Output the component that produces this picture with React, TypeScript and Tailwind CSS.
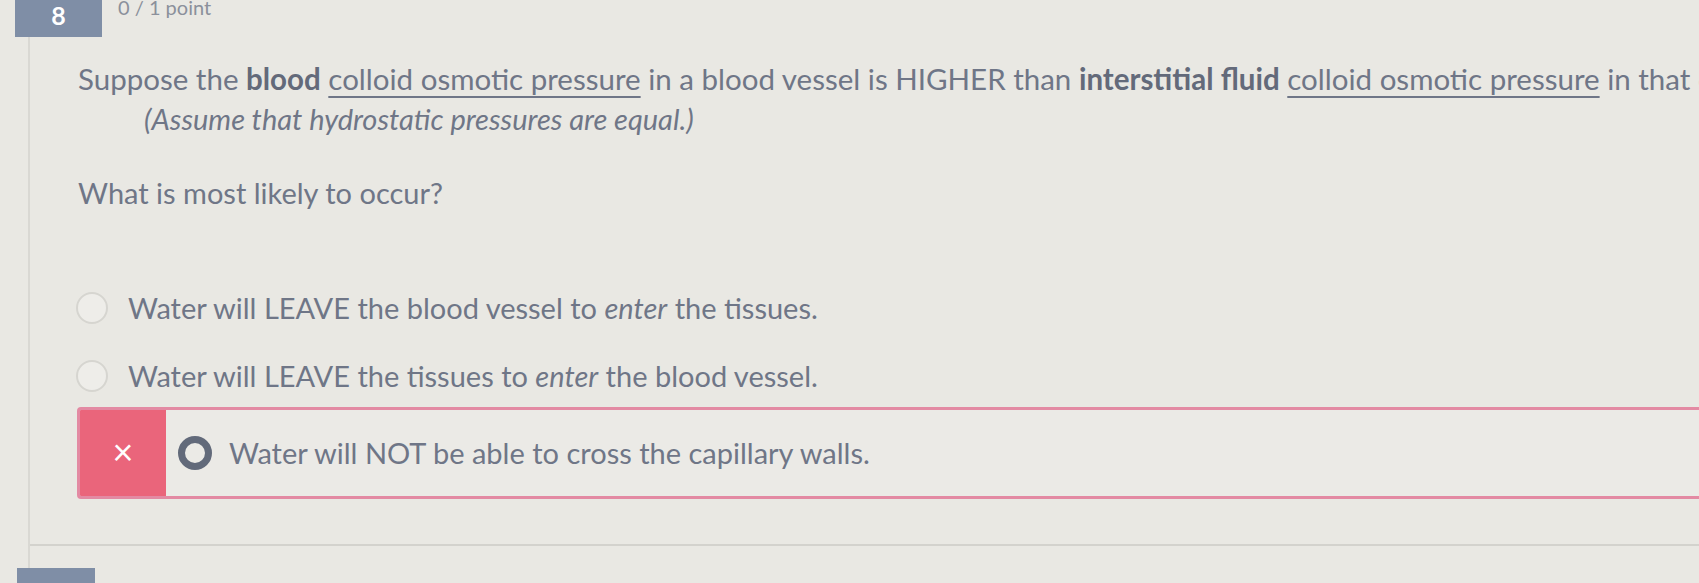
import React from "react";

function Radio() {
  return (
    <div className="w-[32px] h-[32px] rounded-full border-[2px] border-[#d6d5d0] bg-[#eeede9] shrink-0" />
  );
}

export default function App() {
  return (
    <div
      className="relative w-[1699px] h-[583px] overflow-hidden bg-[#e9e8e3] text-[#6f7687] flex flex-col"
      style={{ fontFamily: "Lato, 'Open Sans', sans-serif" }}
    >
      {/* header */}
      <div className="flex items-start h-[37px] shrink-0">
        <div className="ml-[15px] w-[87px] h-[37px] bg-[#7f8ea6] flex items-center justify-center text-white text-[25px] font-bold leading-[28px] pb-[8px]">
          8
        </div>
        <div className="ml-[16px] -mt-[7px] text-[20px] text-[#8b909b] leading-[28px]">0 / 1 point</div>
      </div>

      {/* body */}
      <div className="ml-[28px] border-l-[2px] border-[#d9d8d3] flex-1 flex flex-col">
        <div className="pl-[48px] pt-[22px] flex flex-col">
          <div className="whitespace-nowrap text-[29.5px] leading-[40px]">
            Suppose the <span className="font-bold text-[#636a7a]">blood</span>{" "}
            <span className="underline underline-offset-[6px] decoration-[2px]">colloid osmotic pressure</span> in a blood vessel is HIGHER than{" "}
            <span className="font-bold text-[#636a7a]">interstitial fluid</span>{" "}
            <span className="underline underline-offset-[6px] decoration-[2px]">colloid osmotic pressure</span> in that capillary.
          </div>
          <div className="pl-[66px] italic whitespace-nowrap text-[29px] leading-[40px]">
            (Assume that hydrostatic pressures are equal.)
          </div>
          <div className="mt-[34px] text-[29px] leading-[40px] whitespace-nowrap">What is most likely to occur?</div>

          <div className="mt-[75px] -ml-[2px] flex items-center gap-[20px] h-[40px]">
            <Radio />
            <div className="text-[29px] whitespace-nowrap">
              Water will LEAVE the blood vessel to <span className="italic">enter</span> the tissues.
            </div>
          </div>
          <div className="mt-[28px] -ml-[2px] flex items-center gap-[20px] h-[40px]">
            <Radio />
            <div className="text-[29px] whitespace-nowrap">
              Water will LEAVE the tissues to <span className="italic">enter</span> the blood vessel.
            </div>
          </div>
        </div>

        <div className="mt-[11px] ml-[47px] w-[1700px] h-[92px] flex border-[3px] border-[#e38aa3] rounded-l-[4px] overflow-hidden shrink-0">
          <div className="w-[86px] bg-[#ea657b] flex items-center justify-center text-white text-[36px] font-normal leading-none pb-[4px]">
            ×
          </div>
          <div className="flex items-center pl-[12px] gap-[17px] bg-[#ebeae6] flex-1">
            <div className="w-[34px] h-[34px] rounded-full border-[7px] border-[#626a7a] bg-[#ebeae6] shrink-0" />
            <div className="text-[29px] whitespace-nowrap">Water will NOT be able to cross the capillary walls.</div>
          </div>
        </div>

        <div className="mt-[45px] border-t-[2px] border-[#d3d2cd]" />
      </div>
      <div className="absolute left-[17px] top-[568px] w-[78px] h-[15px] bg-[#7f8ea6]" />
    </div>
  );
}
